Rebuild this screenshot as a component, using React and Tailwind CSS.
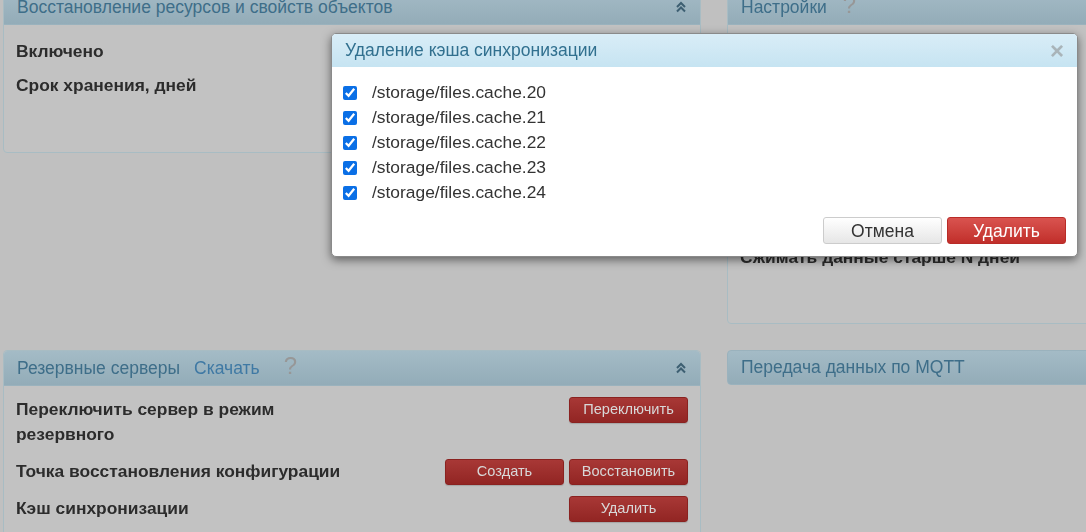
import React from 'react';

const files = [
  '/storage/files.cache.20',
  '/storage/files.cache.21',
  '/storage/files.cache.22',
  '/storage/files.cache.23',
  '/storage/files.cache.24',
];

const Chevrons = () => (
  <svg width="12" height="12" viewBox="0 0 12 12" className="text-[#3d5f72]">
    <path d="M2 6 L6 2 L10 6" fill="none" stroke="currentColor" strokeWidth="2" />
    <path d="M2 10.5 L6 6.5 L10 10.5" fill="none" stroke="currentColor" strokeWidth="2" />
  </svg>
);

const Help = () => <span className="text-[24px] leading-none text-[#979797]">?</span>;

const DimButton = ({ children, w = 'w-[119px]' }) => (
  <button
    type="button"
    className={`${w} h-[26px] rounded-[3px] bg-gradient-to-b from-[#a83836] to-[#922523] border border-[#8a2220] text-[14.6px] text-[#d8d8d8] shadow-[0_1px_1px_rgba(0,0,0,0.15)]`}
  >
    {children}
  </button>
);

const Panel = ({ title, right, children, className = '' }) => (
  <div className={`rounded-[4px] border border-[#a8bcc3] bg-[#c2c2c2] ${className}`}>
    <div className="h-[35px] flex items-center justify-between px-[13px] rounded-t-[4px] bg-gradient-to-b from-[#a4bbc6] to-[#93acb8] border-b border-[#9ab2bd]">
      <div className="flex items-center text-[17.5px] text-[#3e6e89]">{title}</div>
      {right}
    </div>
    {children}
  </div>
);

const Row = ({ label, children, className = '' }) => (
  <div className={`flex items-start justify-between ${className}`}>
    <div className="font-bold text-[17.4px] leading-[25px] text-[#2c2c2c]">{label}</div>
    <div className="flex gap-[5px]">{children}</div>
  </div>
);

export default function App() {
  return (
    <div
      className="relative w-[1086px] h-[532px] overflow-hidden bg-[#c0c0c0]"
      style={{ fontFamily: '"Liberation Sans", Arial, sans-serif' }}
    >
      {/* dimmed page behind the dialog */}
      <div className="blur-[0.6px] -mt-[11px] pl-[3px] grid grid-cols-[698px_698px] gap-x-[26px] gap-y-[26px] w-[1500px]">
        <Panel
          title={<span>Восстановление ресурсов и свойств объектов</span>}
          right={<Chevrons />}
          className="h-[164px] self-start"
        >
          <div className="px-[12px] pt-[14px] flex flex-col gap-[9px]">
            <Row label="Включено" />
            <Row label="Срок хранения, дней" />
          </div>
        </Panel>

        <Panel
          title={
            <>
              <span>Настройки</span>
              <span className="ml-[16px]">
                <Help />
              </span>
            </>
          }
          className="h-[335px]"
        >
          {/* rows above are hidden by the dialog */}
          <div className="px-[12px] pt-[220px]">
            <Row label="Сжимать данные старше N дней" />
          </div>
        </Panel>

        <Panel
          title={
            <>
              <span>Резервные серверы</span>
              <span className="ml-[14px] text-[#3f79a4]">Скачать</span>
              <span className="ml-[24px]">
                <Help />
              </span>
            </>
          }
          right={<Chevrons />}
          className="h-[200px]"
        >
          <div className="pl-[12px] pr-[12px] pt-[11px] flex flex-col gap-[12px]">
            <Row label={<span>Переключить сервер в режим<br />резервного</span>}>
              <DimButton>Переключить</DimButton>
            </Row>
            <Row label="Точка восстановления конфигурации">
              <DimButton>Создать</DimButton>
              <DimButton>Восстановить</DimButton>
            </Row>
            <Row label="Кэш синхронизации" className="-mt-[1px]">
              <DimButton>Удалить</DimButton>
            </Row>
          </div>
        </Panel>

        <div className="self-start">
          <div className="h-[35px] flex items-center px-[13px] rounded-[4px] bg-gradient-to-b from-[#a4bbc6] to-[#93acb8] border border-[#9ab2bd] text-[17.5px] text-[#3e6e89]">
            Передача данных по MQTT
          </div>
        </div>
      </div>

      {/* dialog */}
      <div className="absolute left-[331px] top-[33px] w-[747px] h-[224px] bg-white rounded-[5px] shadow-[0_3px_10px_rgba(0,0,0,0.5)] border border-[#8a8a8a] flex flex-col overflow-hidden">
        <div className="h-[33px] shrink-0 flex items-center justify-between pl-[13px] pr-[13px] bg-gradient-to-b from-[#d9edf7] to-[#c6e4f2]">
          <span className="text-[17.5px] text-[#31708f]">Удаление кэша синхронизации</span>
          <span className="text-[24px] font-bold leading-none text-[#a9b4b9]">×</span>
        </div>
        <div className="pt-[13px] pl-[11px] flex flex-col">
          {files.map((f) => (
            <label key={f} className="flex items-center h-[25px] text-[17.4px] text-[#333]">
              <input
                type="checkbox"
                defaultChecked
                className="w-[14px] h-[14px] m-0 accent-[#0a6fe6]"
              />
              <span className="ml-[15px]">{f}</span>
            </label>
          ))}
        </div>
        <div className="mt-auto mb-[12px] pr-[11px] flex justify-end gap-[5px]">
          <button
            type="button"
            className="w-[119px] h-[27px] rounded-[3px] border border-[#cccccc] bg-gradient-to-b from-[#ffffff] to-[#e6e6e6] text-[17.5px] text-[#333]"
          >
            Отмена
          </button>
          <button
            type="button"
            className="w-[119px] h-[27px] rounded-[3px] border border-[#b92c28] bg-gradient-to-b from-[#d9534f] to-[#c12e2a] text-[17.5px] text-white"
          >
            Удалить
          </button>
        </div>
      </div>
    </div>
  );
}
